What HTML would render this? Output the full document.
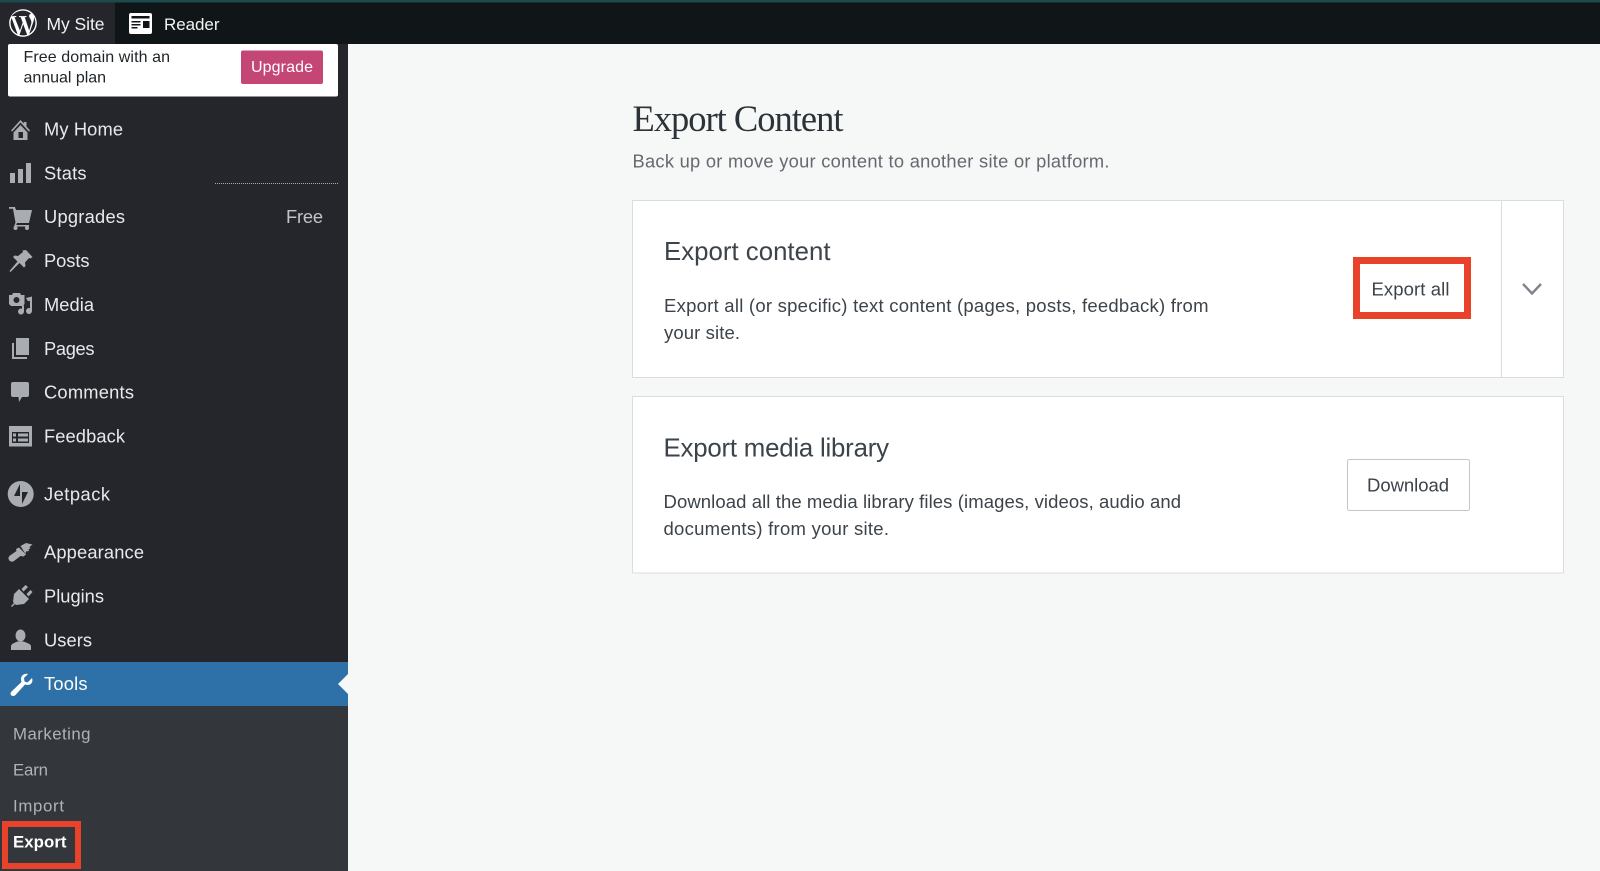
<!DOCTYPE html>
<html lang="en">
<head>
<meta charset="utf-8">
<title>Export Content</title>
<style>
html,body{margin:0;padding:0;width:1600px;height:871px;overflow:hidden;background:#f6f7f7}
svg{display:block}
text{font-family:"Liberation Sans",sans-serif}
.m{font-size:18.3px;fill:#e8e9ea}
.s{font-size:16.8px;fill:#b0b2b6}
.t{font-size:18.5px;fill:#3c434a}
.i{fill:#a9acb1}
</style>
</head>
<body>
<svg width="1600" height="871" viewBox="0 0 1600 871" xmlns="http://www.w3.org/2000/svg">
<rect width="1600" height="871" fill="#f6f7f7"/>
<!-- top bar -->
<rect width="1600" height="44" fill="#101517"/>
<rect width="1600" height="2.5" fill="#1d4a4d"/>
<rect y="2.5" width="115" height="41.5" fill="#24262c"/>
<g transform="translate(9.2,9.2) scale(1.15)" fill="#fff"><path d="M12 0C5.4 0 0 5.4 0 12s5.4 12 12 12 12-5.4 12-12S18.600 0 12 0zM1.200 12c0-1.560.340-3.050.940-4.390l5.150 14.100C3.700 19.970 1.200 16.280 1.200 12zM12 22.800c-1.060 0-2.080-.160-3.050-.440l3.240-9.410 3.310 9.080c.020.050.050.110.080.150-1.120.400-2.320.620-3.580.620zm1.490-15.860c.650-.030 1.240-.100 1.240-.100.580-.070.510-.920-.060-.890 0 0-1.750.140-2.880.140-1.060 0-2.840-.140-2.840-.140-.580-.030-.650.850-.070.890 0 0 .550.070 1.130.100l1.680 4.610-2.360 7.080L4.600 6.940c.650-.030 1.240-.100 1.240-.100.580-.070.510-.920-.060-.890 0 0-1.750.140-2.880.140-.200 0-.440 0-.700-.010C4.130 3.180 7.860 1.200 12 1.200c2.800 0 5.350 1.070 7.260 2.820-.050 0-.090-.010-.140-.010-1.060 0-1.800.920-1.800 1.910 0 .890.510 1.640 1.060 2.530.410.720.890 1.640.890 2.980 0 .920-.350 2-.820 3.490l-1.070 3.580-3.890-11.560zm3.950 14.410l3.300-9.550c.620-1.540.820-2.770.820-3.870 0-.400-.030-.770-.070-1.120.840 1.550 1.320 3.320 1.320 5.190 0 3.990-2.160 7.470-5.370 9.350z" fill-rule="evenodd"/></g>
<text x="46.500" y="30" font-size="17.500" fill="#f2f3f3" textLength="58">My Site</text>
<rect x="129" y="13" width="23" height="21" rx="2" fill="#fff"/>
<path d="M131.500 16h18v2.500h-18zM131.500 21h9v1.500h-9zM131.500 24h9v1.500h-9zM131.500 27h6v1.500h-6z" fill="#101517"/>
<rect x="143" y="21" width="6.500" height="7" fill="#101517"/>
<text x="164" y="30" font-size="17" fill="#f2f3f3" textLength="55.500">Reader</text>
<!-- sidebar -->
<rect y="44" width="348" height="827" fill="#24262c"/>
<rect y="706" width="348" height="165" fill="#33363b"/>
<rect y="662" width="348" height="44" fill="#2d71a8"/>
<path d="M348 674L338 684L348 694Z" fill="#f6f7f7"/>
<!-- upgrade nudge -->
<rect x="8" y="44" width="330" height="52.500" rx="2" fill="#fff"/>
<text x="23.500" y="62" font-size="16" fill="#1d2327" textLength="146.500">Free domain with an</text>
<text x="23.500" y="82.700" font-size="16" fill="#1d2327" textLength="82.500">annual plan</text>
<rect x="241" y="50.500" width="82" height="33.500" rx="2" fill="#c44674"/>
<text x="251" y="72" font-size="16" fill="#fff" textLength="62">Upgrade</text>
<!-- menu text -->
<text class="m" x="44" y="135.500" textLength="79">My Home</text>
<text class="m" x="44" y="179.500" textLength="42.500">Stats</text>
<text class="m" x="44" y="223" textLength="81">Upgrades</text>
<text class="m" x="286" y="223" textLength="37" style="fill:#c3c4c7">Free</text>
<text class="m" x="44" y="267" textLength="45.500">Posts</text>
<text class="m" x="44" y="311" textLength="50">Media</text>
<text class="m" x="44" y="355" textLength="50.500">Pages</text>
<text class="m" x="44" y="398.700" textLength="90">Comments</text>
<text class="m" x="44" y="442.300" textLength="81">Feedback</text>
<text class="m" x="44" y="500.700" textLength="66">Jetpack</text>
<text class="m" x="44" y="558.700" textLength="100">Appearance</text>
<text class="m" x="44" y="602.700" textLength="60">Plugins</text>
<text class="m" x="44" y="646.300" textLength="48">Users</text>
<text class="m" x="44" y="690" textLength="43.500" style="fill:#fff">Tools</text>
<text class="s" x="13" y="739.500" textLength="77.500">Marketing</text>
<text class="s" x="13" y="775.300" textLength="35">Earn</text>
<text class="s" x="13" y="811.300" textLength="51">Import</text>
<text class="s" x="13" y="847.700" textLength="53.500" font-weight="bold" style="fill:#fff">Export</text>
<line x1="215" y1="183.500" x2="338" y2="183.500" stroke="#a9acb1" stroke-width="1" stroke-dasharray="1 1"/>
<!-- icons -->
<g class="i">
<path d="M20.500 120L11 130.500l1.200 1L20.500 122.500l8.300 9 1.200-1-3.500-4V122h-2.800v1.500z"/>
<path fill-rule="evenodd" d="M20.500 125l7 7.500v7.500h-14v-7.500zM18.500 132v6h4.500v-6z"/>
<path d="M10 173h5v10h-5zM18 169h5v14h-5zM26 163h5v20h-5z"/>
<path d="M9 207h6l1 3h16l-3 13H17l-.8 2H29v1.500H14l1.500-4L13 208.800H9z"/>
<circle cx="15.500" cy="228" r="2"/><circle cx="27" cy="228" r="2"/>
<path d="M26 250l6.500 7-2 1.500-1.500-.5-4 4.500.5 3.500-1.500 1.500-4.500-4.500-9 9-1-1 8-9.500-4.500-4.500 1.500-1.500 3.500.5 5-4-.5-1.500z"/>
<path fill-rule="evenodd" d="M13 293h7l1 2h3.500v9l-1.500 2H11l-2-2v-9h3zm3.500 4a3 3 0 100 6 3 3 0 000-6z"/>
<path d="M26 298l6-1.500v14.500a3 3 0 11-2-2.800v-7.500l-2 .5zM24 305.500v6a3 3 0 11-2-2.800v-3.200z"/>
<path d="M16 338h13v17H16z"/>
<path d="M12 343h2v14h13v2H12z"/>
<path d="M13 382h14a2 2 0 012 2v11a2 2 0 01-2 2h-5l-3 5-.5-5H13a2 2 0 01-2-2v-11a2 2 0 012-2z"/>
<path fill-rule="evenodd" d="M9 426h23v20.500H9zM12 432v11h17v-11z"/>
<path d="M13 433.500h3v3h-3zM13 438.500h3v3h-3zM18 433.500h10v3H18zM18 438.500h10v3H18z"/>
<circle cx="20.700" cy="494" r="13"/>
<path d="M20 484v12h-6zM22 504v-12h6z" fill="#24262c"/>
<path d="M20.500 546l5.500-3 6.500 1.500-3 2.500 1 1.500-2 .5.500 2-3 .5-.5 2.500z"/>
<path d="M19 547.500l7 7-2.500 2-3-.5-6.500 5c-1.500 1-4 1-5-1s-.5-3 1-4.500l6.500-4.500-.5-2z"/>
<path d="M11 606l3-3-1-1 1-8 5-5 10 10-5 5-8 1-1-1-3 3zM21.500 589l4-4 2.500 2-4.500 4.500zM26.500 594l4-4 2 2-4 4.500z"/>
<ellipse cx="20.500" cy="635.500" rx="5" ry="6"/>
<path d="M11 650v-4c0-2 4-3.500 6.500-4.500h6c2.500 1 7.500 2.500 7.500 4.500v4z"/>
</g>
<path d="M32 678l-4.500 4.500-3-1-.5-3.500 4-4c-4-1-7.500 2-7 6l.5 2-10 9.500c-1.500 1.500-1 3.500 0 4s2.500 1 4-.5l9.500-10.500 2.500.5c3.500 0 6-3 4.500-7z" fill="#fff"/>
<!-- annotation red box on Export -->
<rect x="5" y="824" width="73" height="42" fill="none" stroke="#e8432a" stroke-width="6"/>
<!-- heading -->
<text x="632.500" y="131" font-size="36.500" fill="#2c3338" textLength="211" style="font-family:'Liberation Serif',serif">Export Content</text>
<text x="632.500" y="167.700" font-size="18.300" fill="#646970" textLength="477">Back up or move your content to another site or platform.</text>
<!-- card 1 -->
<rect x="632.500" y="200.500" width="931" height="177" fill="#fff" stroke="#dcdcde"/>
<line x1="1501.500" y1="200.500" x2="1501.500" y2="377.500" stroke="#dcdcde"/>
<text x="664" y="260" font-size="25.800" fill="#3c434a" textLength="166.500">Export content</text>
<text class="t" x="664" y="312" textLength="544.500">Export all (or specific) text content (pages, posts, feedback) from</text>
<text class="t" x="664" y="339" textLength="76">your site.</text>
<rect x="1356.500" y="260.500" width="111" height="55" fill="#fff" stroke="#e8432a" stroke-width="7"/>
<text class="t" x="1371.500" y="295.300" textLength="78">Export all</text>
<path d="M1523 284l9 9.500 9-9.500" fill="none" stroke="#80848a" stroke-width="2.400"/>
<!-- card 2 -->
<rect x="632.500" y="396.500" width="931" height="176.500" fill="#fff" stroke="#dcdcde"/>
<text x="663.500" y="456.700" font-size="25.800" fill="#3c434a" textLength="225.500">Export media library</text>
<text class="t" x="663.500" y="508" textLength="517.500">Download all the media library files (images, videos, audio and</text>
<text class="t" x="663.500" y="535" textLength="225.500">documents) from your site.</text>
<rect x="1347.500" y="459.500" width="122" height="51" rx="2" fill="#fff" stroke="#c3c4c7"/>
<text class="t" x="1367" y="491.300" textLength="82">Download</text>
</svg>
</body>
</html>
